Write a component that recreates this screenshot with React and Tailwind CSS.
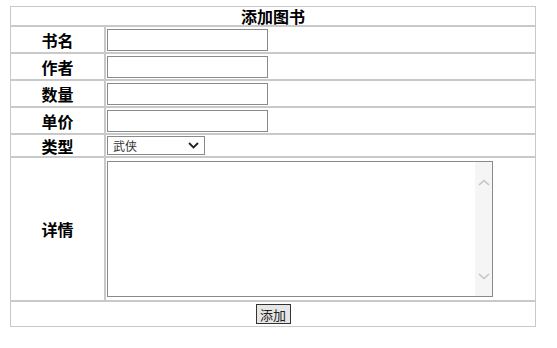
import React from "react";

const font = { fontFamily: '"Noto Sans CJK SC", "Noto Sans", sans-serif' };

function Label({ children, className = "" }) {
  return (
    <div className={`bg-white flex items-center justify-center text-[16px] font-bold text-black leading-none ${className}`}>
      {children}
    </div>
  );
}

function TextRow({ label }) {
  return (
    <>
      <Label className="h-[25px]">{label}</Label>
      <div className="bg-white h-[25px] flex items-center pl-px">
        <input type="text" className="w-[161px] h-[22px] border border-[#8a8a8a] bg-white outline-none" />
      </div>
    </>
  );
}

export default function App() {
  return (
    <div className="w-[557px] h-[348px] bg-white" style={font}>
      <div className="pt-[6px] pl-[10px]">
        <div className="w-[526px] bg-[#c9c9c9] p-px grid grid-cols-[93px_429px] gap-[2px]">
          <div className="col-span-2 bg-white h-[18px] flex items-center justify-center text-[16px] font-bold leading-none text-black">
            添加图书
          </div>
          <TextRow label="书名" />
          <TextRow label="作者" />
          <TextRow label="数量" />
          <TextRow label="单价" />
          <Label className="h-[21px]">类型</Label>
          <div className="bg-white h-[21px] flex items-center pl-px">
            <div className="relative w-[98px] h-[19px] border border-[#8a8a8a] bg-white">
              <select className="appearance-none block w-full h-[17px] py-0 bg-transparent pl-[5px] text-[12px] text-[#333] leading-[17px] outline-none" style={font}>
                <option>武侠</option>
              </select>
              <svg className="absolute right-[5px] top-[5px] pointer-events-none" width="11" height="7" viewBox="0 0 11 7">
                <path d="M1 1 L5.5 5.5 L10 1" fill="none" stroke="#222" strokeWidth="1.8" />
              </svg>
            </div>
          </div>
          <Label className="h-[142px]">详情</Label>
          <div className="bg-white h-[142px] flex items-center pl-px">
            <div className="w-[386px] h-[136px] border border-[#8a8a8a] flex">
              <textarea className="flex-1 resize-none outline-none border-0 bg-white" />
              <div className="w-[17px] bg-[#f5f5f5] flex flex-col items-center justify-between pt-[17px] pb-[16px]">
                <svg width="12" height="7" viewBox="0 0 12 7">
                  <path d="M1 6 L6 1.5 L11 6" fill="none" stroke="#c4c4c4" strokeWidth="1.6" />
                </svg>
                <svg width="12" height="7" viewBox="0 0 12 7">
                  <path d="M1 1 L6 5.5 L11 1" fill="none" stroke="#c4c4c4" strokeWidth="1.6" />
                </svg>
              </div>
            </div>
          </div>
          <div className="col-span-2 bg-white h-[24px] flex items-center justify-center">
            <button className="w-[35px] h-[20px] border border-[#333] bg-[#e6e6e6] text-[13px] text-[#222] leading-none flex items-center justify-center">
              添加
            </button>
          </div>
        </div>
      </div>
    </div>
  );
}
